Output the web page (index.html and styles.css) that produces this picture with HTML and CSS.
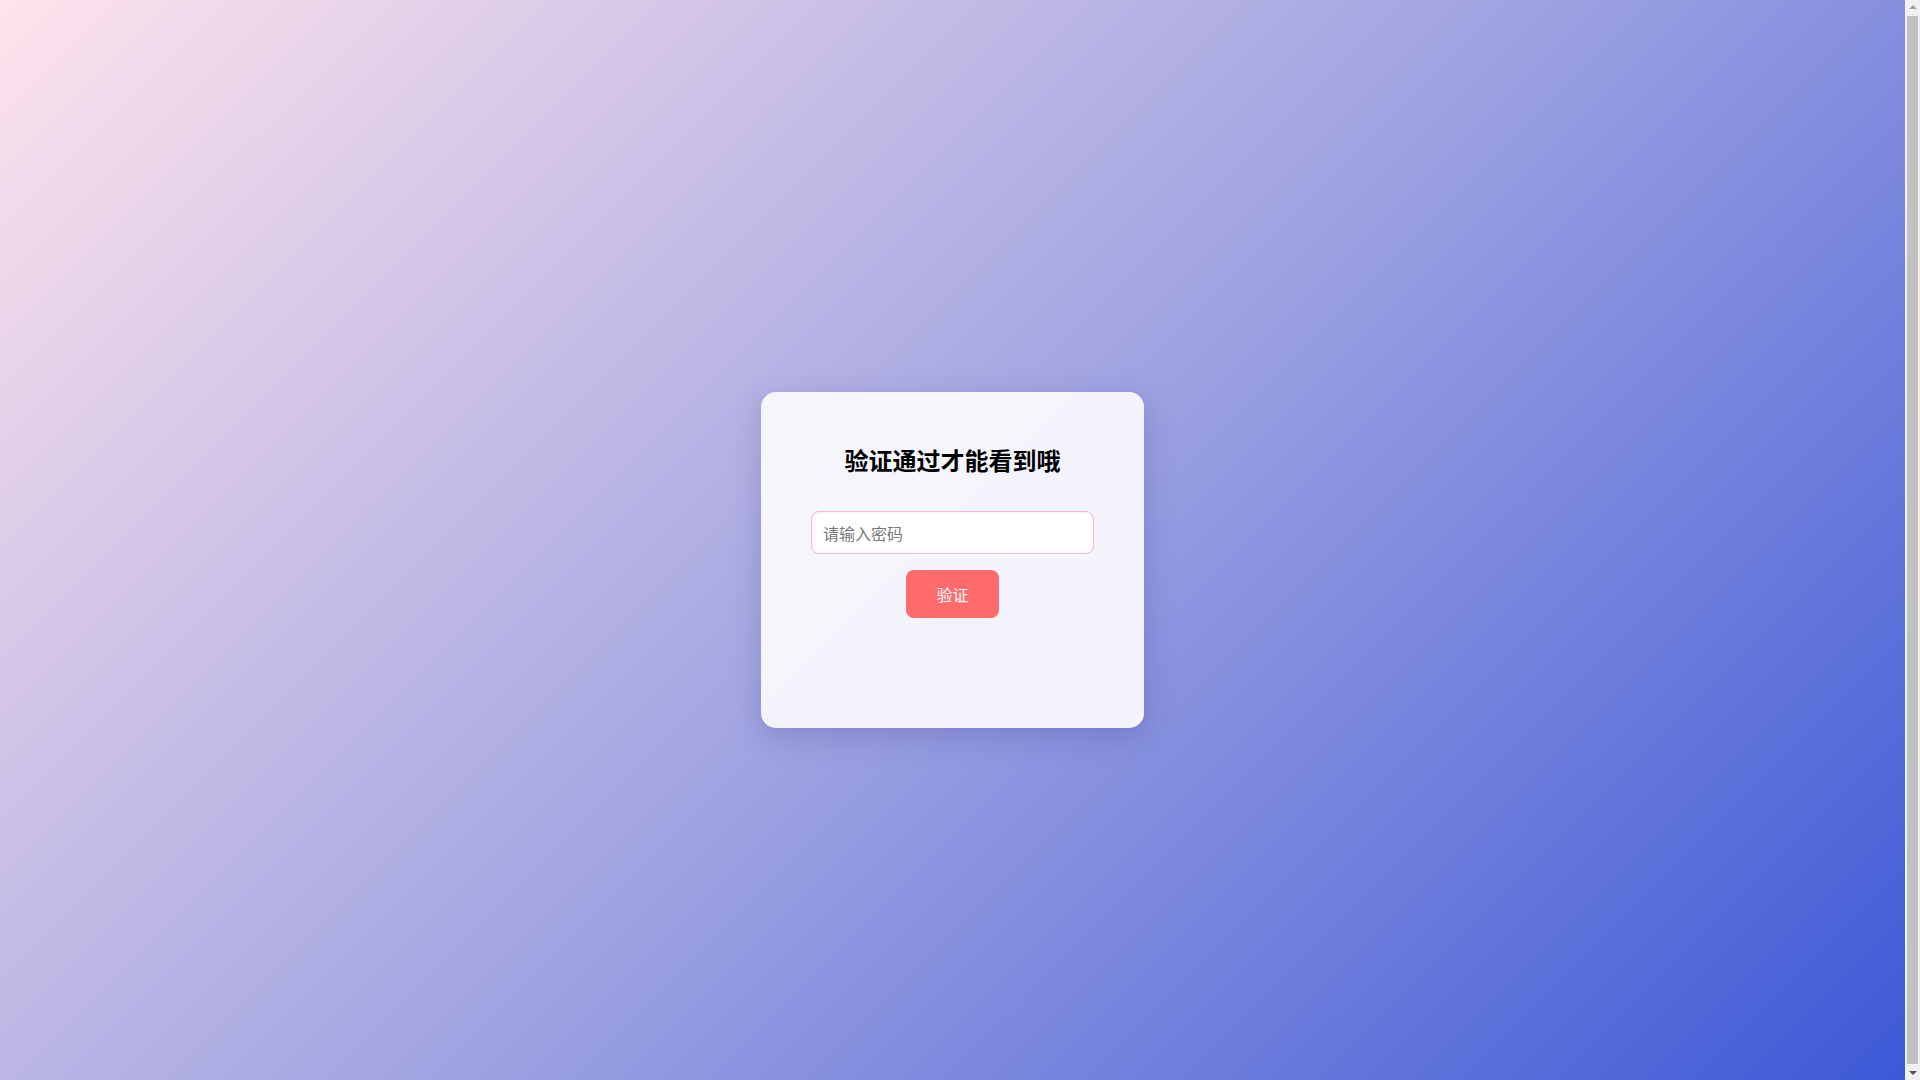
FILE: index.html
```html
<!DOCTYPE html>
<html lang="zh-CN">
<head>
<meta charset="utf-8">
<title>验证</title>
<link rel="stylesheet" href="styles.css">
</head>
<body>
  <div class="card">
    <h2 class="title">验证通过才能看到哦</h2>
    <form class="form" onsubmit="return false;">
      <input class="password" type="password" placeholder="请输入密码">
      <button class="submit" type="submit">验证</button>
    </form>
    <div class="message"></div>
  </div>
  <div class="scrollbar" aria-hidden="true">
    <span class="arrow arrow-up"></span>
    <span class="thumb"></span>
    <span class="arrow arrow-down"></span>
  </div>
</body>
</html>
```

FILE: styles.css
```css
body {
  margin: 0;
  padding: 20px 15px 20px 0;
  min-height: 100vh;
  display: flex;
  align-items: center;
  justify-content: center;
  background: linear-gradient(135deg, #ffe3ec 0%, #a3a6e2 48%, #3956d6 100%);
  font-family: "Noto Sans CJK SC", "Noto Sans", sans-serif;
}
.card {
  width: 283px;
  padding: 50px;
  background: rgba(248, 248, 253, 0.96);
  border-radius: 15px;
  box-shadow: 0 8px 30px rgba(40, 40, 120, 0.22);
  text-align: center;
}
.title {
  margin: 0 0 33px;
  font-size: 24px;
  line-height: 36px;
  font-weight: 700;
  color: #000;
}
.form {
  display: flex;
  flex-direction: column;
  align-items: center;
  gap: 16px;
}
.password {
  box-sizing: border-box;
  width: 100%;
  height: 43px;
  padding: 0 11px;
  border: 1px solid #ffb3d6;
  border-radius: 8px;
  background: #fff;
  box-shadow: inset 0 1px 3px rgba(0, 0, 0, 0.06);
  font-family: "Noto Sans CJK SC", "Noto Sans", sans-serif;
  font-size: 16px;
  color: #333;
  outline: none;
}
.password::placeholder {
  color: #7a7a7a;
}
.submit {
  box-sizing: border-box;
  width: 93px;
  height: 48px;
  border: none;
  border-radius: 8px;
  background: #ff6b6b;
  color: #fff;
  font-family: "Noto Sans CJK SC", "Noto Sans", sans-serif;
  font-size: 16px;
  cursor: pointer;
}
.message {
  min-height: 24px;
  margin-top: 36px;
}
.scrollbar {
  position: fixed;
  top: 0;
  right: 0;
  width: 15px;
  height: 100vh;
  background: #f1f1f1;
  display: flex;
  flex-direction: column;
  align-items: center;
  justify-content: space-between;
}
.thumb {
  flex: 1;
  width: 11px;
  margin: 2px 0;
  background: #c1c1c1;
}
.arrow {
  width: 0;
  height: 0;
  margin: 5px 0;
  border-left: 4px solid transparent;
  border-right: 4px solid transparent;
}
.arrow-up {
  border-bottom: 4px solid #a3a3a3;
}
.arrow-down {
  border-top: 4px solid #505050;
}
```
